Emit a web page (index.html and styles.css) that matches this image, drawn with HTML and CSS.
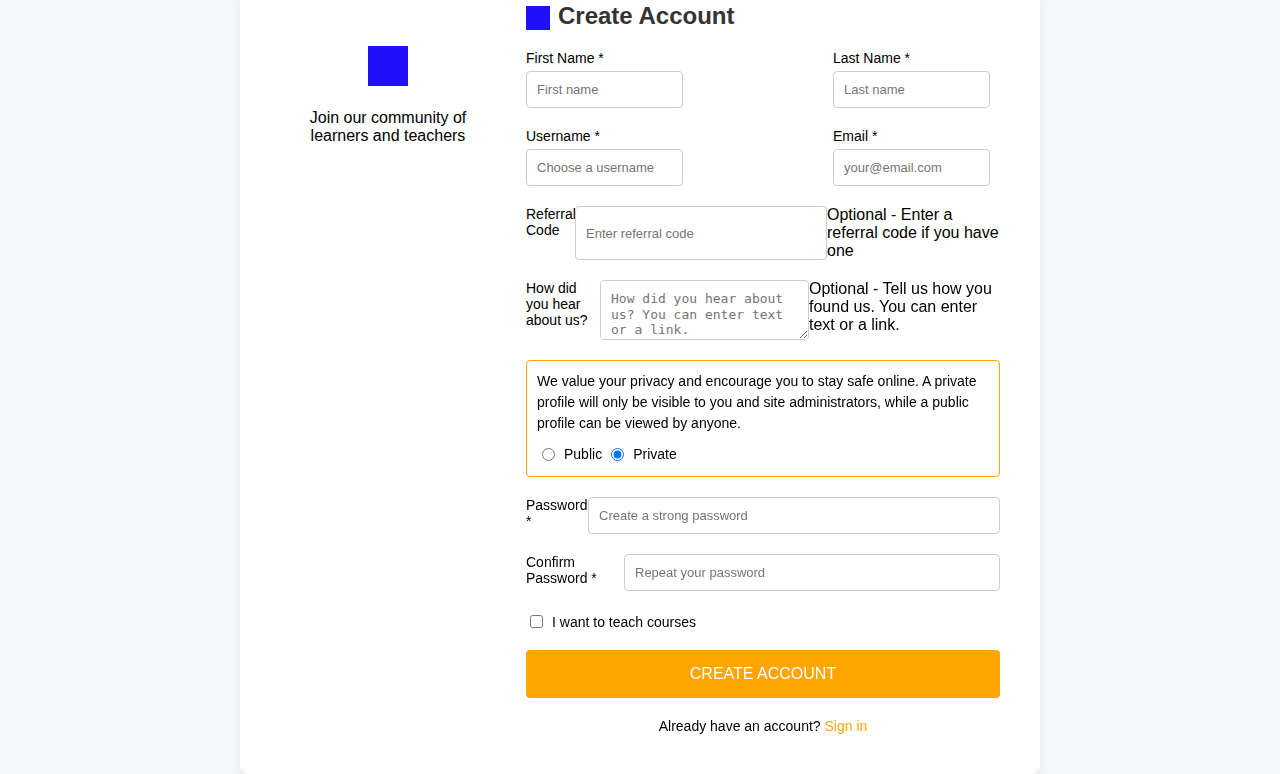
FILE: index.html
```html
<!DOCTYPE html>
<html lang="en">
<head>
<meta charset="utf-8">
<title>Create Account</title>
<link rel="stylesheet" href="styles.css">
</head>
<body>
<div class="page">
  <div class="card">
    <aside class="side">
      <div class="logo"></div>
      <p class="tagline">Join our community of learners and teachers</p>
    </aside>
    <main class="main">
      <h1 class="title"><span class="title-mark"></span>Create Account</h1>
      <form class="form">
        <div class="pair">
          <div class="field">
            <label class="lbl">First Name *</label>
            <input class="inp" type="text" placeholder="First name">
          </div>
          <div class="field">
            <label class="lbl">Last Name *</label>
            <input class="inp" type="text" placeholder="Last name">
          </div>
        </div>
        <div class="pair">
          <div class="field">
            <label class="lbl">Username *</label>
            <input class="inp" type="text" placeholder="Choose a username">
          </div>
          <div class="field">
            <label class="lbl">Email *</label>
            <input class="inp" type="email" placeholder="your@email.com">
          </div>
        </div>
        <div class="row">
          <label class="lbl-side w-ref">Referral Code</label>
          <input class="inp grow" type="text" placeholder="Enter referral code">
          <span class="help w-help1">Optional - Enter a referral code if you have one</span>
        </div>
        <div class="row">
          <label class="lbl-side w-how">How did you hear about us?</label>
          <textarea class="ta" placeholder="How did you hear about us? You can enter text or a link."></textarea>
          <span class="help w-help2">Optional - Tell us how you found us. You can enter text or a link.</span>
        </div>
        <div class="privacy">
          <p class="privacy-text">We value your privacy and encourage you to stay safe online. A private profile will only be visible to you and site administrators, while a public profile can be viewed by anyone.</p>
          <div class="radios">
            <label class="opt"><input type="radio" name="vis">Public</label>
            <label class="opt"><input type="radio" name="vis" checked>Private</label>
          </div>
        </div>
        <div class="row">
          <label class="lbl-side w-pw">Password *</label>
          <input class="inp grow" type="password" placeholder="Create a strong password">
        </div>
        <div class="row">
          <label class="lbl-side w-cpw">Confirm Password *</label>
          <input class="inp grow" type="password" placeholder="Repeat your password">
        </div>
        <div class="check">
          <label class="opt"><input type="checkbox">I want to teach courses</label>
        </div>
        <button class="btn" type="button">CREATE ACCOUNT</button>
        <p class="signin">Already have an account? <a href="#" class="link">Sign in</a></p>
      </form>
    </main>
  </div>
</div>
</body>
</html>
```

FILE: styles.css
```css
* { box-sizing: border-box; }
html, body { margin: 0; padding: 0; }
body {
  background: #f5f6fa;
  font-family: "Liberation Sans", Arial, Helvetica, sans-serif;
  color: #000;
}
.page {
  display: flex;
  justify-content: center;
}
.card {
  width: 800px;
  background: #fff;
  border-radius: 0 0 10px 10px;
  box-shadow: 0 2px 8px rgba(0, 0, 0, 0.06);
  padding: 0 40px 40px;
  display: grid;
  grid-template-columns: 216px 1fr;
  column-gap: 30px;
}
.side {
  padding-top: 46px;
  display: flex;
  flex-direction: column;
  align-items: center;
}
.logo {
  width: 40px;
  height: 40px;
  background: #1f10f7;
}
.tagline {
  margin: 23px 0 0;
  font-size: 16px;
  line-height: 18px;
  text-align: center;
}
.main {
  display: flex;
  flex-direction: column;
}
.title {
  margin: 3px 0 0;
  height: 26px;
  display: flex;
  align-items: center;
  gap: 8px;
  font-size: 24px;
  font-weight: bold;
  color: #333;
  line-height: 26px;
}
.title-mark {
  width: 24px;
  height: 24px;
  background: #1f10f7;
  margin-top: 4px;
}
.form {
  margin-top: 21px;
  display: flex;
  flex-direction: column;
  gap: 20px;
}
.pair {
  display: grid;
  grid-template-columns: 307px auto;
}
.field {
  display: flex;
  flex-direction: column;
  align-items: flex-start;
}
.lbl {
  font-size: 14px;
  line-height: 16px;
  margin-bottom: 5px;
}
.inp {
  font-family: "Liberation Sans", Arial, sans-serif;
  font-size: 13px;
  line-height: 15px;
  padding: 10px;
  border: 1px solid #ccc;
  border-radius: 4px;
  width: 157px;
  color: #000;
  background: #fff;
}
.inp::placeholder, .ta::placeholder { color: #757575; }
.row {
  display: flex;
  align-items: stretch;
}
.lbl-side {
  font-size: 14px;
  line-height: 16px;
  flex: none;
}
.w-ref { width: 49px; }
.w-how { width: 74px; }
.w-pw { width: 62px; }
.w-cpw { width: 98px; }
.grow {
  flex: 1;
  width: auto;
  min-width: 0;
}
.ta {
  flex: none;
  width: 209px;
  height: 60px;
  font-family: "DejaVu Sans Mono", "Liberation Mono", monospace;
  font-size: 13px;
  line-height: 15.5px;
  padding: 10px;
  border: 1px solid #ccc;
  border-radius: 4px;
  resize: vertical;
}
.help {
  flex: none;
  font-size: 16px;
  line-height: 18px;
}
.w-help1 { width: 173px; }
.w-help2 { width: 191px; }
.privacy {
  border: 1px solid #ffa500;
  border-radius: 4px;
  padding: 10px;
}
.privacy-text {
  margin: 0;
  font-size: 14px;
  line-height: 21px;
}
.radios {
  margin-top: 8px;
  height: 24px;
  display: flex;
  align-items: center;
  font-size: 14px;
}
.opt {
  font-size: 14px;
  line-height: 20px;
  display: inline-flex;
  align-items: center;
}
.opt input {
  margin: 0 9px 0 5px;
}
.check .opt input {
  margin-left: 4px;
}
.opt + .opt { margin-left: 4px; }
.check {
  height: 19px;
  margin-top: 1px;
  margin-bottom: -1px;
  display: flex;
  align-items: center;
}
.btn {
  height: 48px;
  border: none;
  border-radius: 4px;
  background: #ffa500;
  color: #fff;
  font-family: "Liberation Sans", Arial, sans-serif;
  font-size: 16px;
  cursor: pointer;
}
.signin {
  margin: 0;
  font-size: 14px;
  line-height: 16px;
  text-align: center;
}
.link {
  color: #ffa500;
  text-decoration: none;
}
```
